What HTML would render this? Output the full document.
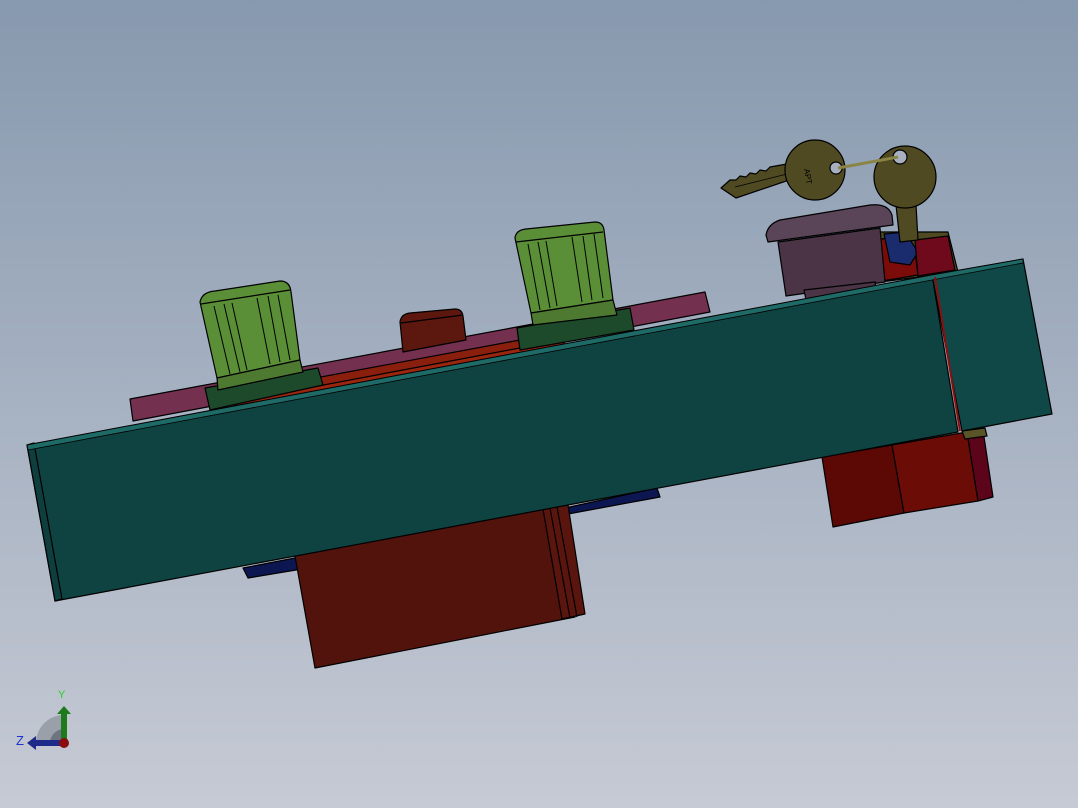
<!DOCTYPE html>
<html><head><meta charset="utf-8"><style>
html,body{margin:0;padding:0;width:1078px;height:808px;overflow:hidden}
body{background:linear-gradient(#8799ae 0%,#a3afc0 45%,#c6cad4 100%)}
svg{position:absolute;left:0;top:0}
</style></head><body>
<svg width="1078" height="808" viewBox="0 0 1078 808" stroke="#000" stroke-width="1.2" stroke-linejoin="round">
<polygon points="130,399 705,292 710,312 133,421" fill="#74304f"/>
<polygon points="243,568 300,557 302,569 248,578" fill="#0c1650"/>
<polygon points="565,508 657,488 660,497 568,514" fill="#0c1650"/>
<polygon points="295,556 556,507 575,617 315,668" fill="#52130d"/>
<polygon points="543,509 568,505 585,614 562,619" fill="#5a150e"/>
<line x1="550" y1="508" x2="570" y2="618"/><line x1="557" y1="507" x2="577" y2="617"/>
<polygon points="822,457 892,445 904,513 833,527" fill="#5c0906"/>
<polygon points="892,445 967,432 978,501 904,513" fill="#6c0c07"/>
<polygon points="967,432 983,430 993,497 978,501" fill="#5c041a"/>
<polygon points="962,431 985,428 987,436 965,439" fill="#5a5528"/>
<polygon points="232,400 560,335 565,345 236,410" fill="#9a260f"/>
<polygon points="240,392 520,340 525,347 244,400" fill="#8a1f0e"/>
<polygon points="205,388 318,368 323,385 210,410" fill="#1e4a2c"/>
<path d="M200,302 Q202,292 215,291 L280,281 Q290,281 291,292 L300,360 L217,378 Z" fill="#5b8f37"/>
<path d="M217,378 L300,360 L303,372 L218,390 Z" fill="#4d7a30"/>
<path d="M214,306 L230,374 M224,304 L240,372 M232,303 L247,370 M257,298 L270,364 M268,296 L280,362 M278,295 L290,360" fill="none" stroke-width="1"/>
<line x1="201" y1="304" x2="290" y2="290"/>
<path d="M400,322 Q401,314 410,313 L455,309 Q462,309 463,316 L466,340 L403,352 Z" fill="#5c170e"/>
<line x1="401" y1="323" x2="463" y2="315"/>
<polygon points="517,328 630,308 634,330 520,350" fill="#1e4a2c"/>
<path d="M515,238 Q516,230 526,229 L595,222 Q603,222 604,230 L613,300 L531,313 Z" fill="#5b8f37"/>
<path d="M531,313 L613,300 L617,315 L533,325 Z" fill="#4d7a30"/>
<path d="M528,244 L540,310 M538,242 L550,308 M546,241 L557,306 M572,237 L582,302 M583,236 L592,300 M594,234 L603,298" fill="none" stroke-width="1"/>
<line x1="516" y1="242" x2="603" y2="232"/>
<polygon points="880,232 948,232 958,272 880,282" fill="#4f4a22"/>
<polygon points="876,240 900,236 915,252 918,275 876,282" fill="#7c0c0a"/>
<polygon points="884,234 905,232 918,252 910,265 890,262" fill="#1b2c6e"/>
<polygon points="915,240 948,236 955,270 918,276" fill="#6e0a1c"/>
<path d="M766,235 Q768,224 780,220 L870,205 Q888,203 892,215 L893,225 L768,242 Z" fill="#5a4458"/>
<polygon points="778,242 880,228 885,282 786,296" fill="#4a3446"/>
<polygon points="804,290 875,282 877,296 806,300" fill="#4a3446"/>
<polygon points="721,188 730,180 736,180 740,176 746,177 750,173 756,174 760,170 766,171 770,167 798,162 801,176 736,198" fill="#4f4a22"/>
<line x1="735" y1="187" x2="795" y2="172" stroke-width="0.8"/>
<circle cx="815" cy="170" r="30" fill="#4f4a22"/>
<circle cx="836" cy="168" r="6" fill="#a8b0c0"/>
<text x="795" y="170" font-family="Liberation Sans,sans-serif" font-size="8" fill="#000" stroke="none" transform="rotate(80 800 175)">APT</text>
<polygon points="896,205 916,205 918,240 900,242" fill="#4f4a22"/>
<circle cx="905" cy="177" r="31" fill="#4f4a22"/>
<circle cx="900" cy="157" r="7" fill="#a8b0c0"/>
<line x1="838" y1="168" x2="898" y2="157" stroke="#8a8446" stroke-width="3"/>
<polygon points="27,445 932,275 958,432 55,601" fill="#0f4342"/>
<polygon points="27,445 34,443 62,599 55,601" fill="#0e3e3d"/>
<polygon points="932,275 1023,259 1052,414 962,431" fill="#104847"/>
<polygon points="27,445 932,275 1023,259 1023,263 932,280 28,450" fill="#1d6a66" stroke-width="0.8"/>
<line x1="935" y1="277" x2="960" y2="431" stroke="#8a1010" stroke-width="2"/>
<path d="M36,743 A28,28 0 0 1 64,715 L64,743 Z" fill="#9aa0aa" stroke="none"/>
<path d="M50,743 A14,14 0 0 1 64,729 L64,743 Z" fill="#6f7580" stroke="none"/>
<rect x="61" y="712" width="6" height="31" fill="#1d7a1d" stroke="none"/>
<polygon points="57,714 64,706 71,714" fill="#1d7a1d" stroke="none"/>
<rect x="34" y="740" width="30" height="6" fill="#1d2a8a" stroke="none"/>
<polygon points="36,736 27,743 36,750" fill="#1d2a8a" stroke="none"/>
<circle cx="64" cy="743" r="5" fill="#8a0c0c" stroke="none"/>
<text x="58" y="698" font-family="Liberation Sans,sans-serif" font-size="11" fill="#2ad02a" stroke="none">Y</text>
<text x="16" y="745" font-family="Liberation Sans,sans-serif" font-size="13" fill="#2030d0" stroke="none">Z</text>
</svg>
</body></html>
